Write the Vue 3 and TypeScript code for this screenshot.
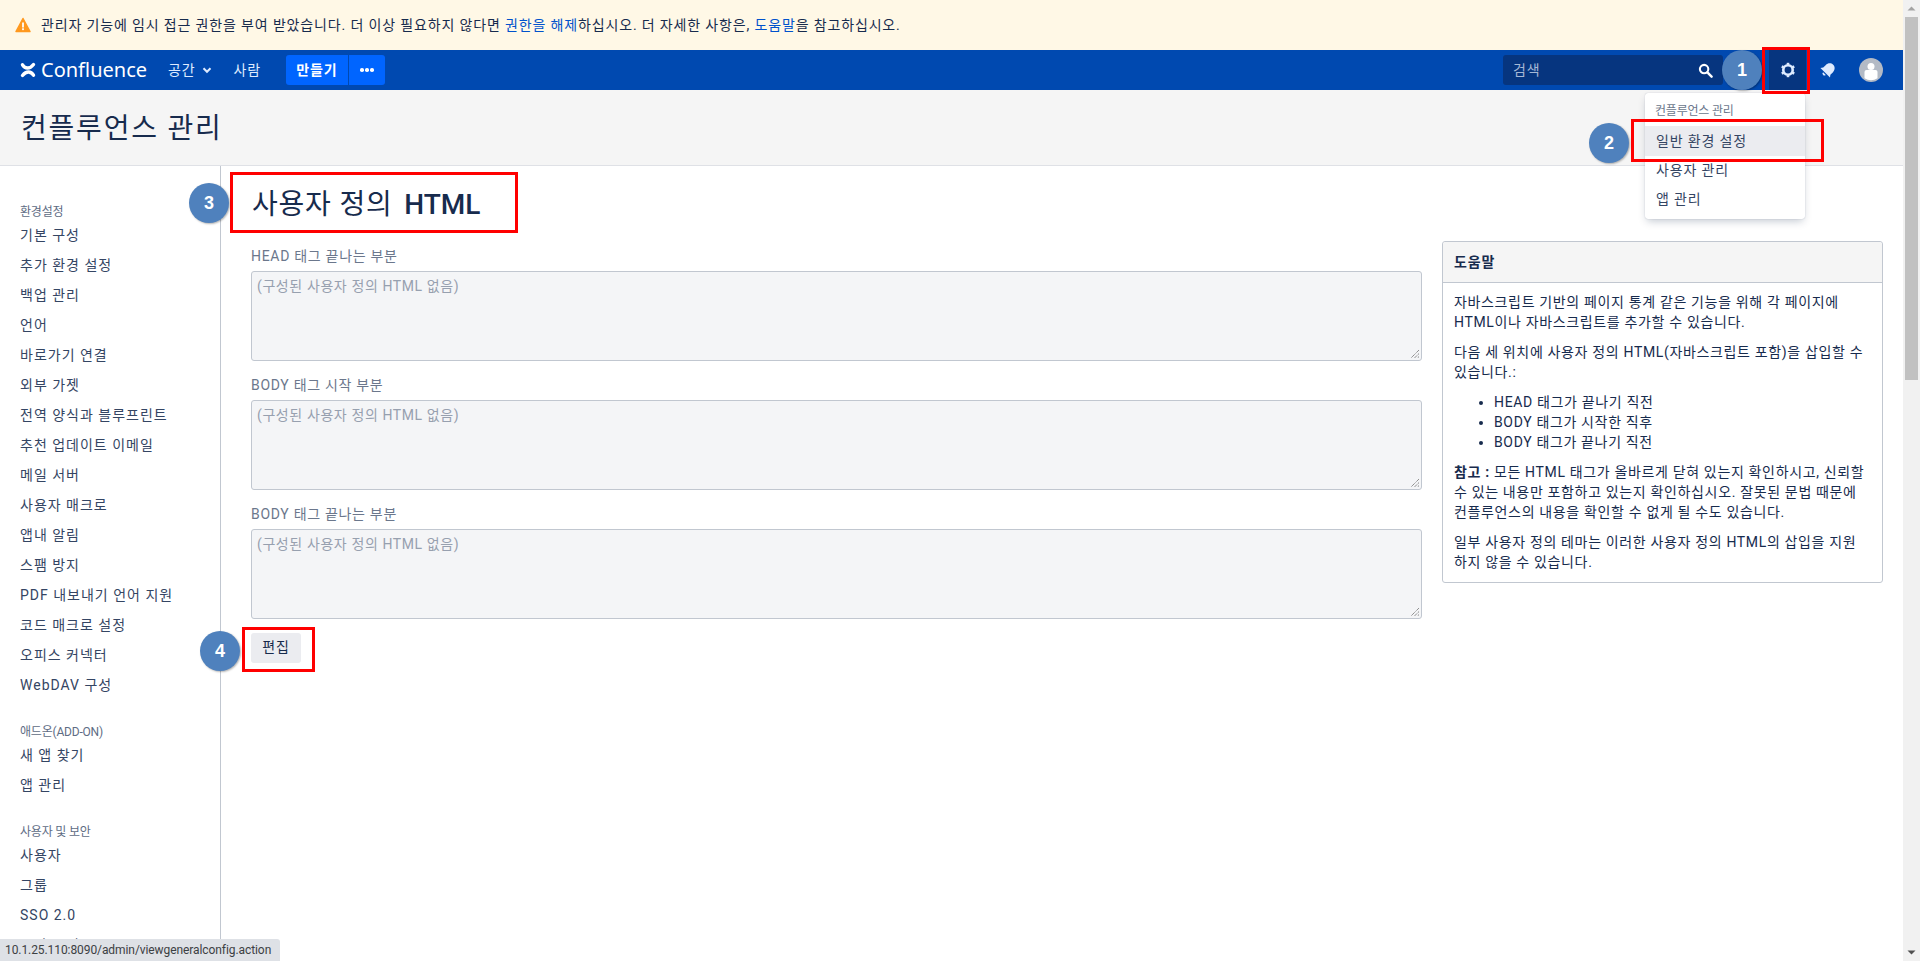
<script setup lang="ts">
interface Section { title: string; items: string[] }
const sections: Section[] = [
  { title: '환경설정', items: ['기본 구성', '추가 환경 설정', '백업 관리', '언어', '바로가기 연결', '외부 가젯', '전역 양식과 블루프린트', '추천 업데이트 이메일', '메일 서버', '사용자 매크로', '앱내 알림', '스팸 방지', 'PDF 내보내기 언어 지원', '코드 매크로 설정', '오피스 커넥터', 'WebDAV 구성'] },
  { title: '애드온(ADD-ON)', items: ['새 앱 찾기', '앱 관리'] },
  { title: '사용자 및 보안', items: ['사용자', '그룹', 'SSO 2.0', '보안 구성'] },
]
const fields = ['HEAD 태그 끝나는 부분', 'BODY 태그 시작 부분', 'BODY 태그 끝나는 부분']
const bullets = ['HEAD 태그가 끝나기 직전', 'BODY 태그가 시작한 직후', 'BODY 태그가 끝나기 직전']
</script>

<template>
  <div class="page">
    <div class="viewport">
      <div class="banner">
        <svg class="warn" width="16" height="16" viewBox="0 0 16 16"><path d="M8 1.5 15 14.5H1Z" fill="#ff991f" stroke="#ff991f" stroke-width="1.5" stroke-linejoin="round"/><rect x="7.1" y="5.5" width="1.8" height="5" fill="#fff"/><rect x="7.1" y="11.3" width="1.8" height="1.8" fill="#fff"/></svg>
        <span>관리자 기능에 임시 접근 권한을 부여 받았습니다. 더 이상 필요하지 않다면 <a>권한을 해제</a>하십시오. 더 자세한 사항은, <a>도움말</a>을 참고하십시오.</span>
      </div>
      <nav class="nav">
        <div class="logo">
          <svg width="16" height="16" viewBox="0 0 16 16"><path d="M2.500 2.800C5 6.800 9.500 7.600 13.500 2.500" fill="none" stroke="#fff" stroke-width="3.400" stroke-linecap="round"/><path d="M2.500 13.500C6.500 8.400 11 9.200 13.500 13.200" fill="none" stroke="#fff" stroke-width="3.400" stroke-linecap="round"/></svg>
          <span>Confluence</span>
        </div>
        <a class="nav-link spaces">공간
          <svg width="10" height="10" viewBox="0 0 10 10"><path d="M1.500 3.300 5 6.800 8.500 3.300" fill="none" stroke="#deebff" stroke-width="2"/></svg>
        </a>
        <a class="nav-link people">사람</a>
        <div class="create">
          <span class="create-main">만들기</span>
          <span class="create-more"><i></i><i></i><i></i></span>
        </div>
        <div class="nav-right">
          <div class="search">
            <span>검색</span>
            <svg width="15" height="15" viewBox="0 0 16 16"><circle cx="6.500" cy="6.500" r="4.500" fill="none" stroke="#fff" stroke-width="2.200"/><path d="M10 10 14.500 14.500" stroke="#fff" stroke-width="2.600" stroke-linecap="round"/></svg>
          </div>
          <div class="icon-btn gear-btn">
            <svg width="16" height="16" viewBox="0 0 16 16"><circle cx="8" cy="8" r="4.700" fill="none" stroke="#deebff" stroke-width="2.600"/><g stroke="#deebff" stroke-width="2.600"><path d="M8 .8v2"/><path d="M8 13.200v2"/><path d="M1.800 4.400l1.700 1"/><path d="M12.500 10.600l1.700 1"/><path d="M1.800 11.600l1.700-1"/><path d="M12.500 5.400l1.700-1"/></g></svg>
          </div>
          <div class="icon-btn bell-btn">
            <svg width="18" height="18" viewBox="0 0 16 16"><g transform="rotate(45 8 8)" fill="#deebff"><path d="M8 1.500c-2.800 0-4.500 2.200-4.500 5v3L2 11.500h12l-1.500-2v-3c0-2.800-1.700-5-4.500-5Z"/><path d="M6.300 12.500h3.400a1.700 1.700 0 0 1-3.400 0Z"/></g></svg>
          </div>
          <div class="avatar">
            <svg width="24" height="24" viewBox="0 0 24 24"><circle cx="12" cy="12" r="12" fill="#b3bac5"/><circle cx="12" cy="8.500" r="3.500" fill="#fff"/><path d="M5.500 14a2 2 0 0 1 2-2h9a2 2 0 0 1 2 2v6.200a12 12 0 0 1-13 0Z" fill="#fff"/></svg>
          </div>
        </div>
      </nav>
      <header class="head"><h1>컨플루언스 관리</h1></header>
      <div class="body">
        <aside class="side">
          <section v-for="s in sections" :key="s.title" class="side-sec">
            <h5>{{ s.title }}</h5>
            <a v-for="i in s.items" :key="i">{{ i }}</a>
          </section>
        </aside>
        <main class="main">
          <h2>사용자 정의 <span class="h2-latin">HTML</span></h2>
          <div class="cols">
            <form class="form" @submit.prevent>
              <div v-for="f in fields" :key="f" class="field">
                <label>{{ f }}</label>
                <div class="ta">
                  <span>(구성된 사용자 정의 HTML 없음)</span>
                  <svg class="grip" width="10" height="10" viewBox="0 0 10 10"><path d="M9 1 1 9M9 4.500 4.500 9M9 7.500 7.500 9" stroke="#666" stroke-width="1" stroke-dasharray="1 .8"/></svg>
                </div>
              </div>
              <button type="button" class="edit">편집</button>
            </form>
            <div class="help">
              <div class="help-head">도움말</div>
              <div class="help-body">
                <p>자바스크립트 기반의 페이지 통계 같은 기능을 위해 각 페이지에<br>HTML이나 자바스크립트를 추가할 수 있습니다.</p>
                <p>다음 세 위치에 사용자 정의 HTML(자바스크립트 포함)을 삽입할 수<br>있습니다.:</p>
                <ul><li v-for="b in bullets" :key="b">{{ b }}</li></ul>
                <p><b>참고 :</b> 모든 HTML 태그가 올바르게 닫혀 있는지 확인하시고, 신뢰할<br>수 있는 내용만 포함하고 있는지 확인하십시오. 잘못된 문법 때문에<br>컨플루언스의 내용을 확인할 수 없게 될 수도 있습니다.</p>
                <p>일부 사용자 정의 테마는 이러한 사용자 정의 HTML의 삽입을 지원<br>하지 않을 수 있습니다.</p>
              </div>
            </div>
          </div>
        </main>
      </div>

      <div class="menu">
        <div class="menu-title">컨플루언스 관리</div>
        <a class="active">일반 환경 설정</a>
        <a class="plain">사용자 관리</a>
        <a class="plain">앱 관리</a>
      </div>
      <div class="box box1"></div>
      <div class="box box2"></div>
      <div class="box box3"></div>
      <div class="box box4"></div>
      <div class="dot dot1">1</div>
      <div class="dot dot2">2</div>
      <div class="dot dot3">3</div>
      <div class="dot dot4">4</div>
      <div class="status">10.1.25.110:8090/admin/viewgeneralconfig.action</div>
    </div>
    <div class="scrollbar">
      <svg class="arrow" width="17" height="17" viewBox="0 0 17 17"><path d="M4.500 10.500 8.500 6.500 12.500 10.500Z" fill="#a3a3a3"/></svg>
      <div class="track"><div class="thumb"></div></div>
      <svg class="arrow" width="17" height="17" viewBox="0 0 17 17"><path d="M4.500 6.500 8.500 10.500 12.500 6.500Z" fill="#505050"/></svg>
    </div>
  </div>
</template>

<style scoped>
.page { display: flex; width: 1920px; height: 961px; overflow: hidden; background: #fff; color: #172b4d; font-family: Roboto, "Noto Sans CJK KR", sans-serif; font-size: 14px; line-height: 20px; letter-spacing: .85px; }
.viewport { position: relative; width: 1903px; flex: none; height: 961px; overflow: hidden; }
.banner { height: 50px; box-sizing: border-box; background: #fff8e6; display: flex; align-items: center; padding-left: 15px; gap: 10px; font-size: 14px; }
.banner a { color: #0052cc; }
.nav { height: 40px; background: #0049b0; display: flex; align-items: center; color: #deebff; }
.logo { display: flex; align-items: center; width: 148px; padding-left: 20px; box-sizing: border-box; gap: 5px; color: #fff; font-family: "Noto Sans", sans-serif; font-size: 20px; letter-spacing: 0; }
.nav-link { color: #deebff; font-size: 14px; }
.spaces { margin-left: 20px; display: flex; align-items: center; gap: 7px; }
.people { margin-left: 21px; }
.create { margin-left: 25px; display: flex; height: 30px; color: #fff; }
.create-main { width: 62px; background: #0065ff; border-radius: 3px 0 0 3px; display: flex; align-items: center; justify-content: center; font-weight: 700; }
.create-more { margin-left: 1px; width: 36px; background: #0065ff; border-radius: 0 3px 3px 0; display: flex; align-items: center; justify-content: center; gap: 1.500px; }
.create-more i { width: 3.500px; height: 3.500px; border-radius: 50%; background: #fff; }
.nav-right { margin-left: auto; display: flex; align-items: center; height: 40px; }
.search { width: 220px; height: 30px; box-sizing: border-box; background: #06357f; border-radius: 3px; display: flex; align-items: center; justify-content: space-between; padding: 0 10px; color: #a5b8d6; margin-right: 46px; }
.icon-btn { height: 40px; display: flex; align-items: center; justify-content: center; }
.gear-btn { width: 37px; background: #06357f; }
.bell-btn { width: 43px; }
.avatar { width: 24px; height: 24px; margin-left: 10px; margin-right: 20px; }
.head { height: 76px; box-sizing: border-box; background: #f5f5f5; border-bottom: 1px solid #dfe1e6; padding: 21px 21px 0; }
.head h1 { margin: 0; font-size: 28px; line-height: 36px; font-weight: 400; letter-spacing: 1.8px; }
.body { display: flex; height: 796px; }
.side { width: 221px; box-sizing: border-box; border-right: 1px solid #c1c7d0; padding: 38px 0 0 20px; flex: none; }
.side-sec { margin-bottom: 24px; }
.side-sec h5 { margin: 0; font-size: 12px; line-height: 16px; font-weight: 400; color: #5e6c84; letter-spacing: -.2px; }
.side-sec a { display: block; height: 30px; line-height: 30px; color: #344563; letter-spacing: 1px; }
.main { flex: 1; padding: 0 19px 0 30px; }
.main h2 { margin: 0; padding: 19px 0 0 1px; height: 60px; box-sizing: border-box; font-size: 28px; line-height: 40px; font-weight: 400; color: #172b4d; letter-spacing: .8px; }
.h2-latin { font-weight: 500; letter-spacing: 0; margin-left: 4px; }
.cols { display: flex; align-items: flex-start; margin-top: 20px; gap: 20px; }
.form { width: 1171px; flex: none; }
.field { margin-bottom: 14px; }
.field label { display: block; height: 20px; line-height: 20px; margin-bottom: 5px; color: #6b778c; letter-spacing: .7px; }
.ta { position: relative; height: 90px; box-sizing: border-box; background: #f4f5f7; border: 1px solid #c1c7d0; border-radius: 3px; padding: 4px 5px; color: #97a0af; letter-spacing: .6px; }
.grip { position: absolute; right: 1px; bottom: 1px; }
.edit { display: block; width: 50px; height: 30px; padding: 0 0 2px; border: 0; border-radius: 3px; background: #ebecf0; color: #172b4d; font: inherit; letter-spacing: inherit; }
.help { width: 441px; box-sizing: border-box; flex: none; border: 1px solid #c1c7d0; border-radius: 3px; margin-top: -5px; }
.help-head { height: 40px; line-height: 40px; padding: 0 11px; background: #f5f5f5; border-bottom: 1px solid #c1c7d0; font-weight: 700; color: #172b4d; border-radius: 3px 3px 0 0; }
.help-body { padding: 9px 11px 10px; letter-spacing: .65px; }
.help-body p { margin: 0 0 10px; white-space: nowrap; }
.help-body p:last-child { margin: 0; }
.help-body ul { margin: 0 0 10px; padding: 0 0 0 40px; }
.menu { position: absolute; left: 1645px; top: 93px; width: 160px; height: 126px; box-sizing: border-box; background: #fff; border-radius: 3px; box-shadow: 0 4px 8px -2px rgba(9,30,66,.25), 0 0 1px rgba(9,30,66,.31); padding-top: 10px; color: #344563; }
.menu-title { font-size: 12px; line-height: 16px; padding: 0 10px; height: 23px; color: #6b778c; letter-spacing: -.2px; }
.menu a { display: block; height: 30px; line-height: 30px; padding: 0 11px; }
.menu a.active { background: #ebecf0; }
.menu a.plain { height: 29px; line-height: 29px; }
.box { position: absolute; box-sizing: border-box; border: 3px solid #f00; }
.box1 { left: 1762px; top: 47px; width: 48px; height: 47px; }
.box2 { left: 1631px; top: 119px; width: 193px; height: 43px; }
.box3 { left: 230px; top: 172px; width: 288px; height: 61px; }
.box4 { left: 242px; top: 627px; width: 73px; height: 45px; }
.dot { position: absolute; width: 40px; height: 40px; border-radius: 50%; background: #4f81bd; color: #fff; display: flex; align-items: center; justify-content: center; font-size: 18px; font-weight: 700; box-shadow: 1px 1px 2px rgba(0,0,0,.3); font-family: "Liberation Sans", sans-serif; letter-spacing: 0; }
.dot1 { left: 1722px; top: 50px; }
.dot2 { left: 1589px; top: 123px; }
.dot3 { left: 189px; top: 183px; }
.dot4 { left: 200px; top: 631px; }
.status { position: absolute; left: 0; bottom: 0; width: 280px; box-sizing: border-box; height: 22px; line-height: 23px; padding-left: 5px; background: #dee1e6; border-radius: 0 3px 0 0; font-size: 12px; color: #3c4043; letter-spacing: -.08px; white-space: nowrap; }
.scrollbar { width: 17px; height: 961px; background: #f1f1f1; display: flex; flex-direction: column; flex: none; }
.arrow { flex: none; }
.track { flex: 1; padding: 0 2px; }
.thumb { height: 363px; background: #c1c1c1; }
</style>
